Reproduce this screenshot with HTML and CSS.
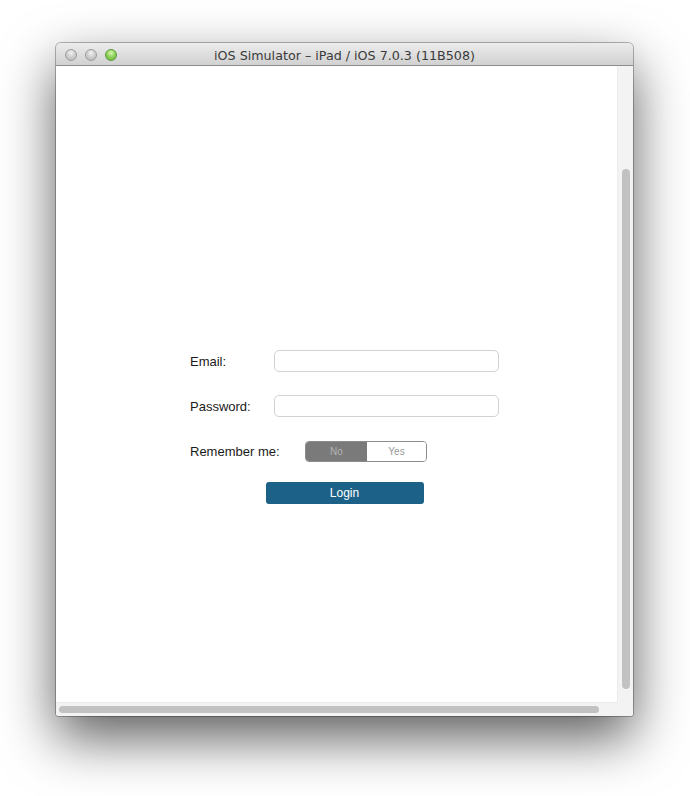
FILE: index.html
```html
<!DOCTYPE html>
<html>
<head>
<meta charset="utf-8">
<title>iOS Simulator</title>
<link rel="stylesheet" href="styles.css">
</head>
<body>
<div class="desktop">
  <div class="window">
    <div class="titlebar">
      <div class="lights">
        <span class="light"></span>
        <span class="light"></span>
        <span class="light green"></span>
      </div>
      <div class="title">iOS Simulator – iPad / iOS 7.0.3 (11B508)</div>
    </div>
    <div class="body">
      <div class="viewport">
        <form class="login-form">
          <div class="row">
            <label class="label">Email:</label>
            <div class="input"></div>
          </div>
          <div class="row row-pass">
            <label class="label">Password:</label>
            <div class="input"></div>
          </div>
          <div class="row row-remember">
            <label class="label label-wide">Remember me:</label>
            <div class="segmented">
              <span class="seg seg-on">No</span>
              <span class="seg seg-off">Yes</span>
            </div>
          </div>
          <div class="row row-login">
            <button type="button" class="login-btn">Login</button>
          </div>
        </form>
      </div>
      <div class="vscroll"><div class="vthumb"></div></div>
      <div class="hscroll"><div class="hthumb"></div></div>
      <div class="corner"></div>
    </div>
  </div>
</div>
</body>
</html>
```

FILE: styles.css
```css
html, body {
  margin: 0;
  padding: 0;
  background: #ffffff;
}

.desktop {
  width: 690px;
  height: 796px;
  padding: 43px 0 0 56px;
  box-sizing: border-box;
}

.window {
  width: 577px;
  height: 673px;
  display: flex;
  flex-direction: column;
  border-radius: 5px 5px 3px 3px;
  background: #f6f6f6;
  box-shadow: 0 22px 54px rgba(0, 0, 0, 0.64), 0 0 0 1px rgba(0, 0, 0, 0.28);
  overflow: hidden;
}

.titlebar {
  height: 22px;
  flex: 0 0 22px;
  display: flex;
  align-items: center;
  position: relative;
  background: linear-gradient(#ececec, #d1d1d1);
  border-bottom: 1px solid #8e8e8e;
}

.lights {
  display: flex;
  gap: 8px;
  padding-left: 9px;
  padding-top: 2px;
}

.light {
  width: 10px;
  height: 10px;
  border-radius: 50%;
  border: 1px solid #9d9d9d;
  background: radial-gradient(circle at 50% 30%, #f2f2f2 0%, #d0d0d0 45%, #b6b6b6 100%);
}

.light.green {
  border-color: #5b9a3a;
  background: radial-gradient(circle at 50% 30%, #d9f5b0 0%, #93d45e 45%, #62b23a 100%);
}

.title {
  position: absolute;
  left: 0;
  right: 0;
  top: 2px;
  line-height: 22px;
  text-align: center;
  font-family: "DejaVu Sans", sans-serif;
  font-size: 12.7px;
  color: #3a3a3a;
  pointer-events: none;
}

.body {
  flex: 1;
  display: grid;
  grid-template-columns: 1fr 15px;
  grid-template-rows: 1fr 13px;
  background: #f4f4f4;
}

.viewport {
  background: #ffffff;
  border-right: 1px solid #ececec;
  border-bottom: 1px solid #ececec;
  padding-top: 284px;
  padding-left: 134px;
  font-family: "Liberation Sans", Arial, sans-serif;
}

.vscroll {
  display: flex;
  justify-content: center;
  padding: 103px 0 12px;
  background: #f3f3f3;
}

.vthumb {
  width: 8px;
  height: 520px;
  border-radius: 4px;
  background: #c2c2c2;
}

.hscroll {
  display: flex;
  align-items: center;
  padding-left: 3px;
  background: #f3f3f3;
}

.hthumb {
  width: 540px;
  height: 7px;
  border-radius: 4px;
  background: #c2c2c2;
}

.corner {
  background: #f3f3f3;
}

.login-form {
  width: 309px;
}

.row {
  display: flex;
  align-items: center;
  height: 22px;
}

.row-pass {
  margin-top: 23px;
}

.row-remember {
  margin-top: 24px;
  height: 21px;
}

.row-login {
  margin-top: 20px;
  justify-content: center;
}

.label {
  width: 84px;
  flex: 0 0 84px;
  font-size: 13px;
  color: #1a1a1a;
}

.label-wide {
  width: 115px;
  flex: 0 0 115px;
}

.input {
  flex: 1;
  height: 20px;
  border: 1px solid #d2d2d2;
  border-radius: 5px;
  background: #ffffff;
}

.segmented {
  display: flex;
  width: 122px;
  height: 21px;
  box-sizing: border-box;
  border: 1px solid #8c8c8c;
  border-radius: 4px;
  overflow: hidden;
  font-size: 10px;
}

.seg {
  display: flex;
  align-items: center;
  justify-content: center;
}

.seg-on {
  width: 61px;
  background: #7a7a7a;
  color: #b4b4b4;
}

.seg-off {
  flex: 1;
  background: #ffffff;
  color: #9a9a9a;
}

.login-btn {
  width: 158px;
  height: 22px;
  border: 0;
  border-radius: 3px;
  background: #1c6187;
  color: #ffffff;
  font-family: "Liberation Sans", Arial, sans-serif;
  font-size: 12px;
  padding: 0;
}
```
